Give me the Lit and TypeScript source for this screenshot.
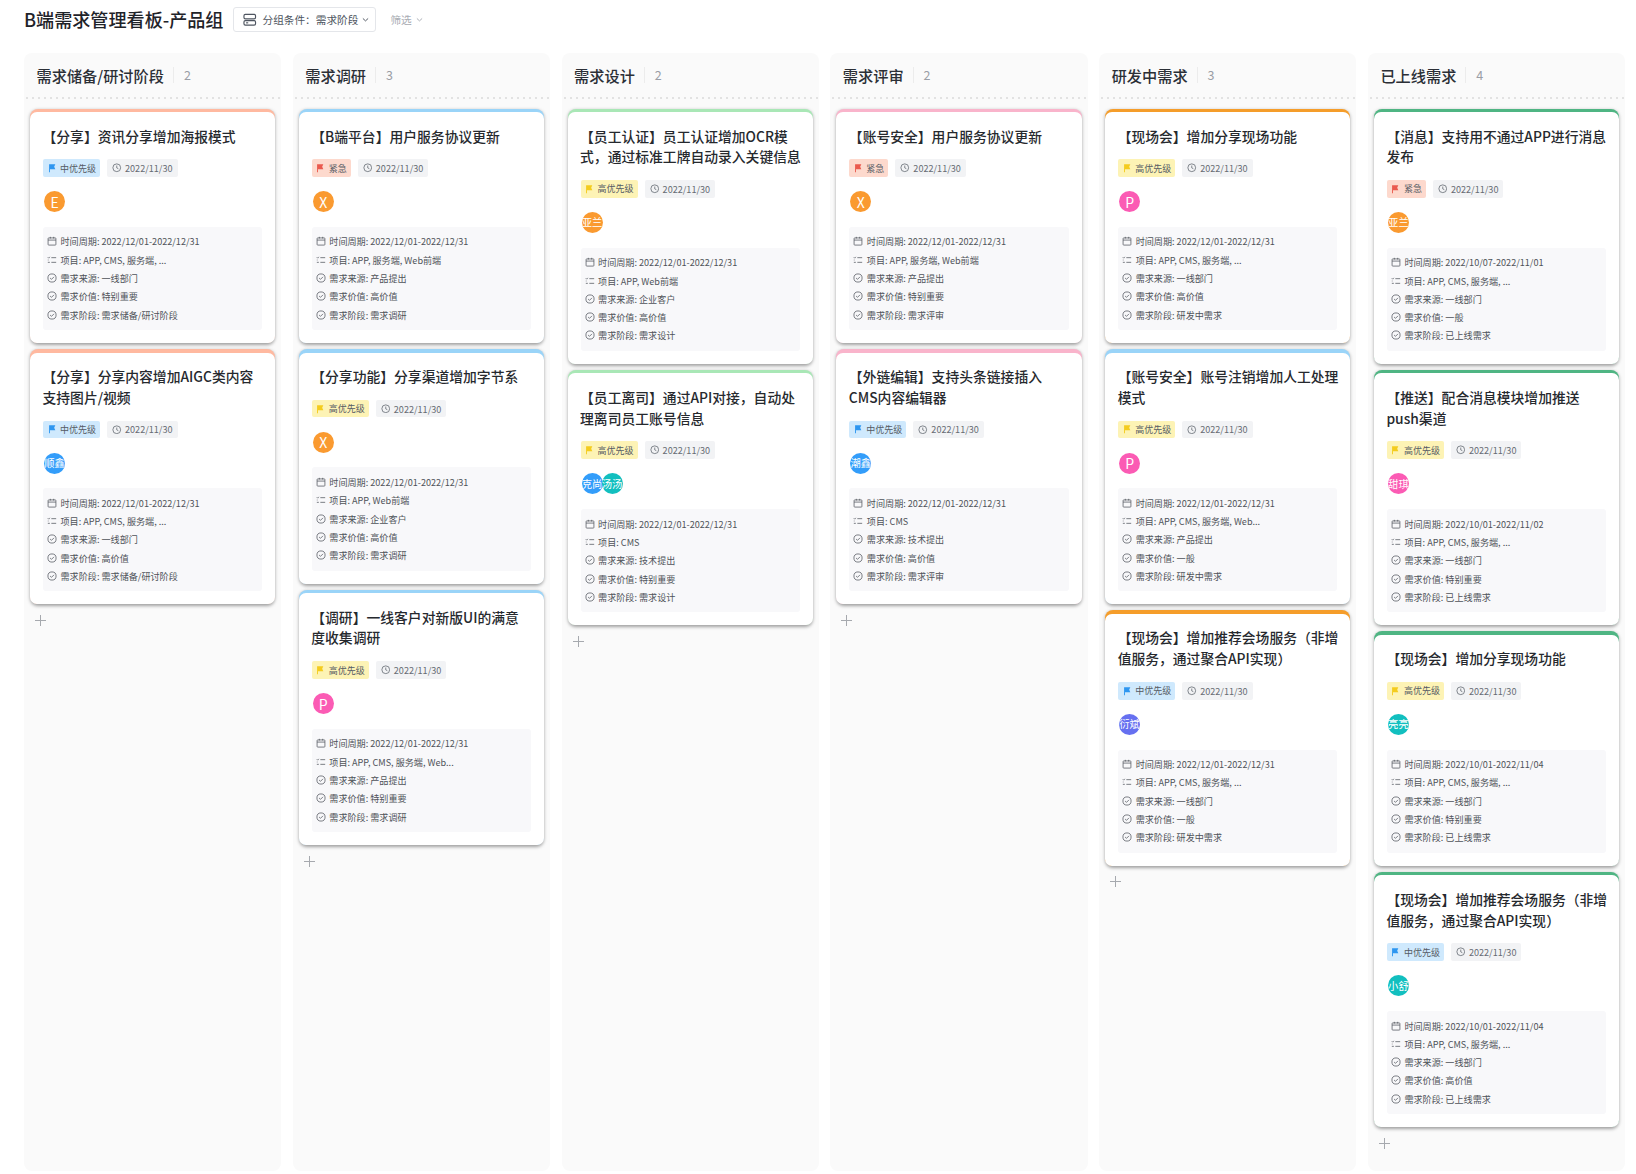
import { LitElement, html, css, svg } from "lit";
import { customElement } from "lit/decorators.js";

type Pri = "mid" | "high" | "urgent";
interface Person { n: string; c: string }
interface Card { color: string; title: string; pri: Pri; people: Person[]; period: string; project: string; source: string; value: string; stage: string }

const P1 = "2022/12/01-2022/12/31";
const ORANGE = "#fa9a30", BLUE = "#339dfa", PINK = "#fb5bb4", TEAL = "#12bfbf", INDIGO = "#6670f0";
const A3 = "APP, CMS, 服务端, ...";
const X = { n: "X", c: ORANGE }, Pp = { n: "P", c: PINK };
const cOr = "#ffb9a0", cBl = "#9ad4f8", cGr = "#a9e7b6", cPk = "#f9b4cb", cAm = "#f59d2a", cEm = "#4fb583";

const columns: { name: string; cards: Card[] }[] = [
  { name: "需求储备/研讨阶段", cards: [
    { color: cOr, title: "【分享】资讯分享增加海报模式", pri: "mid", people: [{ n: "E", c: ORANGE }], period: P1, project: A3, source: "一线部门", value: "特别重要", stage: "需求储备/研讨阶段" },
    { color: cOr, title: "【分享】分享内容增加AIGC类内容支持图片/视频", pri: "mid", people: [{ n: "顺鑫", c: BLUE }], period: P1, project: A3, source: "一线部门", value: "高价值", stage: "需求储备/研讨阶段" },
  ] },
  { name: "需求调研", cards: [
    { color: cBl, title: "【B端平台】用户服务协议更新", pri: "urgent", people: [X], period: P1, project: "APP, 服务端, Web前端", source: "产品提出", value: "高价值", stage: "需求调研" },
    { color: cBl, title: "【分享功能】分享渠道增加字节系", pri: "high", people: [X], period: P1, project: "APP, Web前端", source: "企业客户", value: "高价值", stage: "需求调研" },
    { color: cBl, title: "【调研】一线客户对新版UI的满意\n度收集调研", pri: "high", people: [Pp], period: P1, project: "APP, CMS, 服务端, Web...", source: "产品提出", value: "特别重要", stage: "需求调研" },
  ] },
  { name: "需求设计", cards: [
    { color: cGr, title: "【员工认证】员工认证增加OCR模式，通过标准工牌自动录入关键信息", pri: "high", people: [{ n: "亚兰", c: ORANGE }], period: P1, project: "APP, Web前端", source: "企业客户", value: "高价值", stage: "需求设计" },
    { color: cGr, title: "【员工离司】通过API对接，自动处理离司员工账号信息", pri: "high", people: [{ n: "克尚", c: BLUE }, { n: "汤汤", c: TEAL }], period: P1, project: "CMS", source: "技术提出", value: "特别重要", stage: "需求设计" },
  ] },
  { name: "需求评审", cards: [
    { color: cPk, title: "【账号安全】用户服务协议更新", pri: "urgent", people: [X], period: P1, project: "APP, 服务端, Web前端", source: "产品提出", value: "特别重要", stage: "需求评审" },
    { color: cPk, title: "【外链编辑】支持头条链接插入\nCMS内容编辑器", pri: "mid", people: [{ n: "潮鑫", c: BLUE }], period: P1, project: "CMS", source: "技术提出", value: "高价值", stage: "需求评审" },
  ] },
  { name: "研发中需求", cards: [
    { color: cAm, title: "【现场会】增加分享现场功能", pri: "high", people: [Pp], period: P1, project: A3, source: "一线部门", value: "高价值", stage: "研发中需求" },
    { color: cBl, title: "【账号安全】账号注销增加人工处理模式", pri: "high", people: [Pp], period: P1, project: "APP, CMS, 服务端, Web...", source: "产品提出", value: "一般", stage: "研发中需求" },
    { color: cAm, title: "【现场会】增加推荐会场服务（非增值服务，通过聚合API实现）", pri: "mid", people: [{ n: "衍斌", c: INDIGO }], period: P1, project: A3, source: "一线部门", value: "一般", stage: "研发中需求" },
  ] },
  { name: "已上线需求", cards: [
    { color: cEm, title: "【消息】支持用不通过APP进行消息发布", pri: "urgent", people: [{ n: "亚兰", c: ORANGE }], period: "2022/10/07-2022/11/01", project: A3, source: "一线部门", value: "一般", stage: "已上线需求" },
    { color: cEm, title: "【推送】配合消息模块增加推送push渠道", pri: "high", people: [{ n: "甜琪", c: PINK }], period: "2022/10/01-2022/11/02", project: A3, source: "一线部门", value: "特别重要", stage: "已上线需求" },
    { color: cEm, title: "【现场会】增加分享现场功能", pri: "high", people: [{ n: "亮亮", c: TEAL }], period: "2022/10/01-2022/11/04", project: A3, source: "一线部门", value: "特别重要", stage: "已上线需求" },
    { color: cEm, title: "【现场会】增加推荐会场服务（非增值服务，通过聚合API实现）", pri: "mid", people: [{ n: "小舒", c: TEAL }], period: "2022/10/01-2022/11/04", project: A3, source: "一线部门", value: "高价值", stage: "已上线需求" },
  ] },
];

const priLabel: Record<Pri, string> = { mid: "中优先级", high: "高优先级", urgent: "紧急" };

const flag = html`<svg class="ic" viewBox="0 0 12 12"><path d="M2.5 1.5H10L8.6 4.4 10 7.5H3.6V11H2.5z" fill="currentColor"/></svg>`;
const clock = html`<svg class="ic" viewBox="0 0 12 12" fill="none" stroke="currentColor" stroke-width=".9"><circle cx="6" cy="6" r="4.9"/><path d="M6 3.2V6.2L8 7.2"/></svg>`;
const calendar = html`<svg class="ic dic" viewBox="0 0 12 12" fill="none" stroke="currentColor" stroke-width=".9"><rect x="1.3" y="2.3" width="9.4" height="8.6" rx=".8"/><path d="M1.3 4.9H10.7M4 1V3M8 1V3"/></svg>`;
const listIc = html`<svg class="ic dic" viewBox="0 0 12 12" fill="none" stroke="currentColor" stroke-width=".9"><path d="M1 2.8 2 3.8 3.4 2.2M5.2 3.2H11M1 8.8H3.4M5.2 8.8H11M1 6H1.8"/></svg>`;
const checkIc = html`<svg class="ic dic" viewBox="0 0 12 12" fill="none" stroke="currentColor" stroke-width=".9"><circle cx="6" cy="6" r="4.9"/><path d="M3.7 6 5.4 7.6 8.4 4.6"/></svg>`;
const chevron = html`<svg class="chev" viewBox="0 0 8 8" fill="none" stroke="currentColor" stroke-width="1.1"><path d="M1 2.8 4 5.6 7 2.8"/></svg>`;
const groupIc = svg`<rect x="1" y="1.5" width="12" height="4.6" rx="1.4"/><rect x="1" y="7.9" width="12" height="4.6" rx="1.4"/><path d="M3.2 10.2H5.4"/>`;

@customElement("app-root")
export class AppRoot extends LitElement {
  static styles = css`
    :host { display: block; box-sizing: border-box; height: 1174px; padding: 0 10px 3px 24px; background: #fff;
      font-family: "Noto Sans CJK SC", "Noto Sans", sans-serif; color: #1f2329; overflow: hidden; }
    .page { display: flex; flex-direction: column; height: 100%; }
    .top { display: flex; align-items: center; height: 39px; margin-bottom: 14px; }
    h1 { margin: 0; font-size: 18.1px; font-weight: 500; line-height: 39px; color: #1f2329; }
    .group { display: flex; align-items: center; box-sizing: border-box; height: 25px; margin-left: 10px; padding: 0 6px 0 9px;
      border: 1px solid #e4e6ea; border-radius: 3px; font-size: 10.67px; color: #4e5560; }
    .group svg.g { width: 13.5px; height: 13.5px; margin-right: 5.5px; fill: none; stroke: #4e5560; stroke-width: 1.2; }
    .chev { width: 7px; height: 7px; margin-left: 4px; }
    .filter { display: flex; align-items: center; margin-left: 14px; font-size: 10.67px; color: #a9adb4; }
    .board { flex: 1; display: grid; grid-template-columns: repeat(6, 257.2px); column-gap: 11.6px; }
    .col { background: #fafafa; border-radius: 8px; min-width: 0; }
    .head { display: flex; align-items: center; box-sizing: border-box; height: 46px; padding: 0 0 3px 12.5px;
      background-image: radial-gradient(circle, #e2e2e2 .9px, transparent 1px); background-size: 6px 2px; background-repeat: repeat-x; background-position: 0 bottom; }
    .name { font-size: 15.2px; font-weight: 500; color: #2b2f36; }
    .count { margin-left: 9px; padding-left: 10px; border-left: 1px solid #ececec; font-size: 12.5px; line-height: 16px; color: #9a9ea6; }
    .list { padding: 9.5px 6px 0; display: flex; flex-direction: column; gap: 6px; }
    .card { border-radius: 8px; padding-top: 3.5px; box-shadow: 0 1.5px 3.5px rgba(0,0,0,.36); }
    .inner { background: #fff; border-radius: 7px; padding: 13.5px 13px 13px; }
    .title { font-size: 13.8px; line-height: 20.8px; font-weight: 500; color: #26292e; margin: 0 -4px 0 -.5px; white-space: pre-line; }
    .tags { display: flex; gap: 7px; margin-top: 13px; }
    .tag { display: flex; align-items: center; height: 17.5px; padding: 0 4px 0 3.5px; border-radius: 2px; font-size: 9px; color: #555b64; background: #f2f3f5; }
    .ic { width: 10px; height: 10px; margin-right: 3.5px; flex: none; }
    .date { padding: 0 5px; font-size: 9.1px; color: #666b73; }
    .date .ic { width: 9.5px; height: 9.5px; color: #555b64; margin-right: 3.5px; }
    .mid { background: #cfe9fd; } .mid .ic { color: #2e96f0; }
    .high { background: #fdf3b5; } .high .ic { color: #f4cc1e; }
    .urgent { background: #fdd9cd; } .urgent .ic { color: #ea5a4e; }
    .people { display: flex; margin-top: 14.5px; padding-left: 1px; }
    .av { width: 21px; height: 21px; border-radius: 50%; display: flex; align-items: center; justify-content: center;
      color: #fff; font-size: 10.3px; line-height: 1; white-space: nowrap; overflow: hidden; }
    .av.one { font-size: 14px; }
    .av + .av { margin-left: -1px; }
    .detail { margin-top: 14.5px; padding: 5.5px 4px 6.3px; background: #f8f8fa; border-radius: 3px; }
    .row { display: flex; align-items: center; height: 18.3px; font-size: 9.1px; color: #4f5359; white-space: nowrap; }
    .dic { width: 10px; height: 10px; margin-right: 3.5px; color: #50555d; }
    .add { padding: 5.5px 0 0 10px; height: 26px; }
    .add svg { width: 13px; height: 13px; stroke: #a6a9ae; stroke-width: 1; display: block; margin-top: 4px; }
  `;

  private card(c: Card) {
    return html`<div class="card" style="background:${c.color}"><div class="inner">
      <div class="title">${c.title}</div>
      <div class="tags">
        <span class="tag ${c.pri}">${flag}${priLabel[c.pri]}</span>
        <span class="tag date">${clock}2022/11/30</span>
      </div>
      <div class="people">${c.people.map((p) => html`<span class="av ${p.n.length === 1 ? "one" : ""}" style="background:${p.c}">${p.n}</span>`)}</div>
      <div class="detail">
        <div class="row">${calendar}时间周期: ${c.period}</div>
        <div class="row">${listIc}项目: ${c.project}</div>
        <div class="row">${checkIc}需求来源: ${c.source}</div>
        <div class="row">${checkIc}需求价值: ${c.value}</div>
        <div class="row">${checkIc}需求阶段: ${c.stage}</div>
      </div>
    </div></div>`;
  }

  render() {
    return html`<div class="page">
      <div class="top">
        <h1>B端需求管理看板-产品组</h1>
        <div class="group"><svg class="g" viewBox="0 0 14 14">${groupIc}</svg>分组条件：需求阶段${chevron}</div>
        <div class="filter">筛选${chevron}</div>
      </div>
      <div class="board">
        ${columns.map((col) => html`<section class="col">
          <div class="head"><span class="name">${col.name}</span><span class="count">${col.cards.length}</span></div>
          <div class="list">${col.cards.map((c) => this.card(c))}</div>
          <div class="add"><svg viewBox="0 0 13 13"><path d="M6.5 1V12M1 6.5H12"/></svg></div>
        </section>`)}
      </div>
    </div>`;
  }
}
